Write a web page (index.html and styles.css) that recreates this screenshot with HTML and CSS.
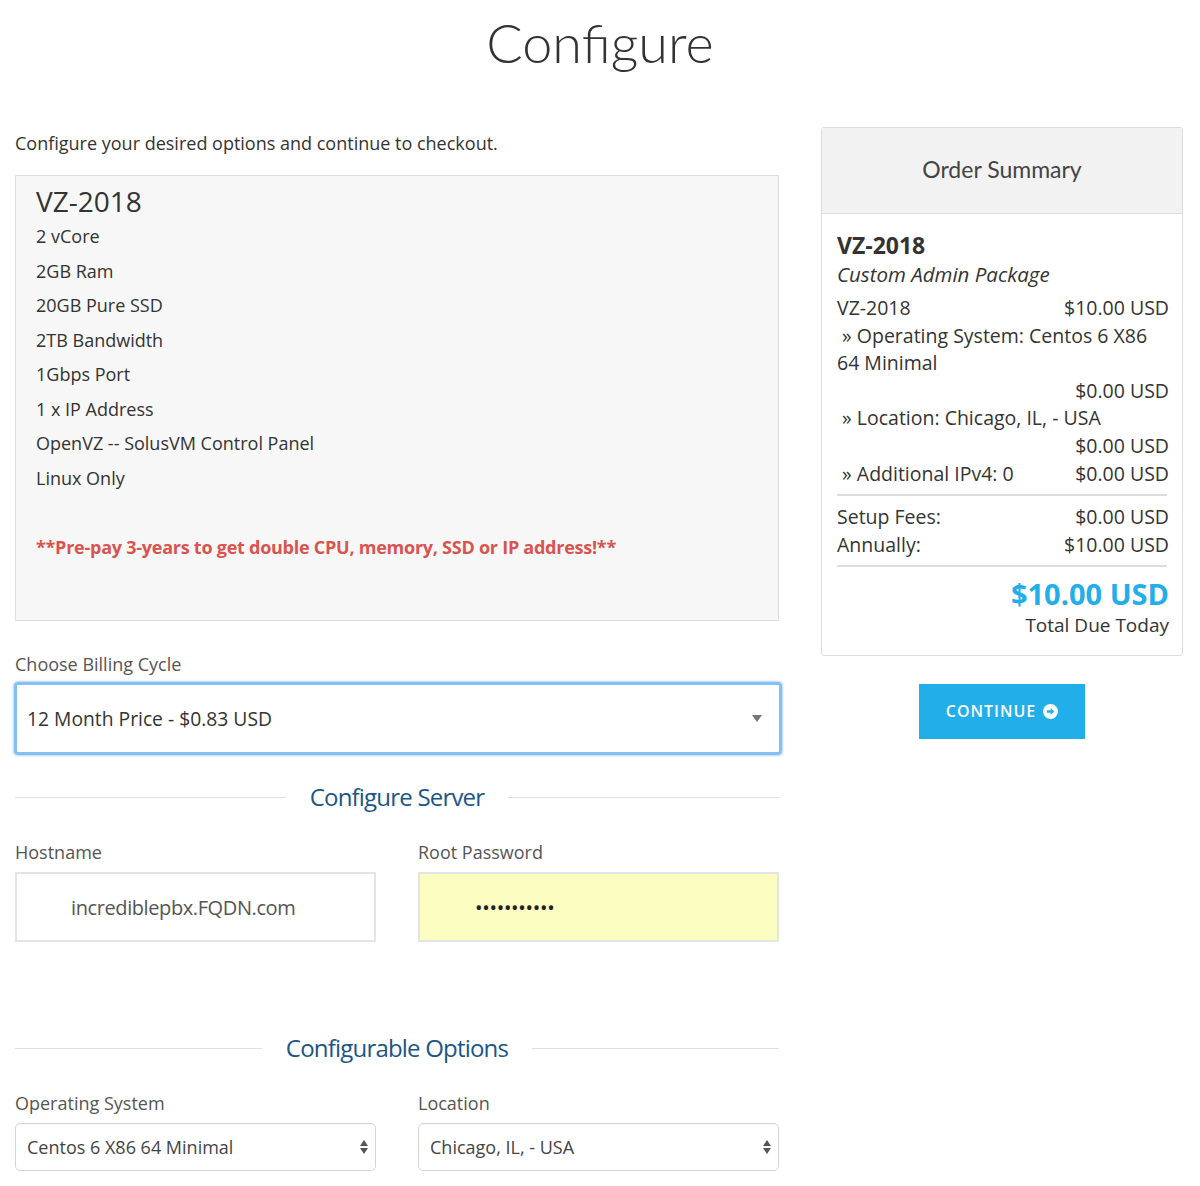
FILE: index.html
```html
<!DOCTYPE html>
<html lang="en">
<head>
<meta charset="utf-8">
<title>Configure</title>
<link rel="stylesheet" href="styles.css">
</head>
<body>
<h1 class="page-title">Configure</h1>
<div class="layout">
  <main class="main-col">
    <p class="intro">Configure your desired options and continue to checkout.</p>
    <div class="product-box">
      <h3 class="product-name">VZ-2018</h3>
      <div class="features">
        <div>2 vCore</div>
        <div>2GB Ram</div>
        <div>20GB Pure SSD</div>
        <div>2TB Bandwidth</div>
        <div>1Gbps Port</div>
        <div>1 x IP Address</div>
        <div>OpenVZ -- SolusVM Control Panel</div>
        <div>Linux Only</div>
        <div>&nbsp;</div>
        <div class="promo">**Pre-pay 3-years to get double CPU, memory, SSD or IP address!**</div>
      </div>
    </div>

    <label class="field-label">Choose Billing Cycle</label>
    <div class="select-big">
      <span>12 Month Price - $0.83 USD</span>
      <span class="caret"></span>
    </div>

    <div class="section-head"><span>Configure Server</span></div>

    <div class="two-col">
      <div>
        <label class="field-label">Hostname</label>
        <div class="text-input host">incrediblepbx.FQDN.com</div>
      </div>
      <div>
        <label class="field-label">Root Password</label>
        <div class="text-input pass">•••••••••••</div>
      </div>
    </div>

    <div class="section-head options"><span>Configurable Options</span></div>

    <div class="two-col">
      <div>
        <label class="field-label">Operating System</label>
        <div class="select-small"><span>Centos 6 X86 64 Minimal</span><span class="updown"><i class="up"></i><i class="down"></i></span></div>
      </div>
      <div>
        <label class="field-label">Location</label>
        <div class="select-small"><span>Chicago, IL, - USA</span><span class="updown"><i class="up"></i><i class="down"></i></span></div>
      </div>
    </div>
  </main>

  <aside class="side-col">
    <div class="summary">
      <div class="summary-head">Order Summary</div>
      <div class="summary-body">
        <div class="sum-product">VZ-2018</div>
        <div class="sum-group">Custom Admin Package</div>
        <div class="row"><span>VZ-2018</span><span>$10.00 USD</span></div>
        <div class="sub">&nbsp;» Operating System: Centos 6 X86<br>64 Minimal</div>
        <div class="price-line">$0.00 USD</div>
        <div class="sub">&nbsp;» Location: Chicago, IL, - USA</div>
        <div class="price-line">$0.00 USD</div>
        <div class="row"><span>&nbsp;» Additional IPv4: 0</span><span>$0.00 USD</span></div>
        <hr class="sep">
        <div class="row"><span>Setup Fees:</span><span>$0.00 USD</span></div>
        <div class="row"><span>Annually:</span><span>$10.00 USD</span></div>
        <hr class="sep">
        <div class="total">$10.00 USD</div>
        <div class="total-label">Total Due Today</div>
      </div>
    </div>
    <div class="btn-wrap">
      <button class="btn-continue">CONTINUE
        <svg class="arrow" viewBox="0 0 16 16" width="15" height="15" aria-hidden="true">
          <circle cx="8" cy="8" r="8" fill="#fff"/>
          <path d="M4 6.6h4.2V4.2L12 8l-3.8 3.8V9.4H4z" fill="#21aee9"/>
        </svg>
      </button>
    </div>
  </aside>
</div>
</body>
</html>
```

FILE: styles.css
```css
* { box-sizing: border-box; }

body {
  margin: 0;
  background: #fff;
  color: #333;
  font-family: "Open Sans", "Liberation Sans", sans-serif;
}

.page-title {
  margin: 0;
  padding-top: 10px;
  height: 126px;
  text-align: center;
  font-family: "Lato", "Open Sans", sans-serif;
  font-weight: 300;
  font-size: 54px;
  line-height: 66px;
  color: #333;
}

.layout {
  display: grid;
  grid-template-columns: 764px 362px;
  column-gap: 42px;
  padding: 0 15px;
  align-items: start;
}

.main-col { padding-top: 5px; }

.intro {
  margin: 0 0 20px;
  font-size: 18px;
  line-height: 24px;
}

.product-box {
  background: #f7f7f7;
  border: 1px solid #ddd;
  padding: 7px 20px 56px;
  height: 446px;
}

.product-name {
  margin: 0;
  font-size: 28px;
  font-weight: 400;
  line-height: 36px;
}

.features {
  font-size: 18px;
  line-height: 34.5px;
}

.promo {
  color: #d9534f;
  font-weight: 700;
  letter-spacing: -0.25px;
}

.field-label {
  display: block;
  font-size: 18px;
  line-height: 24px;
  color: #555;
}

.main-col > .field-label { margin-top: 31px; margin-bottom: 6px; }

.select-big {
  display: flex;
  align-items: center;
  justify-content: space-between;
  margin: 0 -3px 0 -1px;
  height: 73px;
  border: 3px solid #86bff2;
  border-radius: 4px;
  box-shadow: 0 0 2px 1px rgba(102, 175, 233, 0.5);
  padding: 0 17px 0 10px;
  font-size: 19.3px;
  color: #333;
}

.caret {
  width: 0;
  height: 0;
  border-left: 5px solid transparent;
  border-right: 5px solid transparent;
  border-top: 7px solid #777;
}

.section-head {
  display: flex;
  align-items: center;
  gap: 24px;
  margin-top: 26px;
  font-size: 24px;
  line-height: 32px;
  color: #1b5686;
  letter-spacing: -0.8px;
}
.section-head::before,
.section-head::after {
  content: "";
  flex: 1;
  height: 1px;
  background: #dde1e4;
}

.section-head.options { margin-top: 90px; }

.two-col {
  display: grid;
  grid-template-columns: 361px 361px;
  column-gap: 42px;
  margin-top: 27px;
}

.two-col .field-label { margin-bottom: 8px; }

.text-input {
  display: flex;
  align-items: center;
  height: 70px;
  border: 2px solid #e1e5e8;
  font-size: 20px;
  letter-spacing: -0.4px;
}

.text-input.host {
  padding-left: 54px;
  color: #555;
}

.text-input.pass {
  padding-left: 55px;
  background: #fbfcc0;
  font-size: 20px;
  letter-spacing: -0.3px;
  color: #222;
}

.select-small {
  display: flex;
  align-items: center;
  justify-content: space-between;
  height: 48px;
  border: 1px solid #d5d5d5;
  border-radius: 5px;
  padding: 0 7px 0 11px;
  font-size: 18px;
  color: #444;
  box-shadow: inset 0 1px 1px rgba(0,0,0,0.03);
}

.updown {
  display: flex;
  flex-direction: column;
  gap: 2px;
}
.updown i {
  width: 0;
  height: 0;
  border-left: 4px solid transparent;
  border-right: 4px solid transparent;
}
.updown .up { border-bottom: 6px solid #555; }
.updown .down { border-top: 6px solid #555; }

/* Summary */

.summary {
  border: 1px solid #ddd;
  border-radius: 3px;
  margin-top: 1px;
}

.summary-head {
  height: 86px;
  padding-bottom: 3px;
  background: #f2f2f2;
  border-bottom: 1px solid #ddd;
  display: flex;
  align-items: center;
  justify-content: center;
  font-family: "Lato", "Open Sans", sans-serif;
  font-size: 23px;
  color: #444;
}

.summary-body {
  padding: 16px 13px 15px 15px;
  font-size: 19.5px;
  line-height: 27.6px;
  color: #333;
}

.sum-product {
  font-size: 23px;
  font-weight: 700;
  line-height: 30px;
}

.sum-group {
  font-style: italic;
  font-size: 20.5px;
  line-height: 28px;
  margin-bottom: 6px;
}

.row {
  display: flex;
  justify-content: space-between;
}

.price-line { text-align: right; }

.sep {
  border: 0;
  border-top: 2px solid #ddd;
  margin: 7px 2px 7px 0;
}

.total {
  margin-top: 9px;
  text-align: right;
  font-size: 29px;
  font-weight: 700;
  line-height: 36px;
  color: #21aee9;
}

.total-label { text-align: right; font-size: 19px; }

.btn-wrap {
  display: flex;
  justify-content: center;
  margin-top: 28px;
}

.btn-continue {
  display: inline-flex;
  align-items: center;
  gap: 7px;
  width: 166px;
  height: 55px;
  justify-content: center;
  border: 0;
  background: #21aee9;
  color: #fff;
  font-family: "Open Sans", sans-serif;
  font-size: 16px;
  font-weight: 600;
  letter-spacing: 1px;
  padding: 0;
}
```
